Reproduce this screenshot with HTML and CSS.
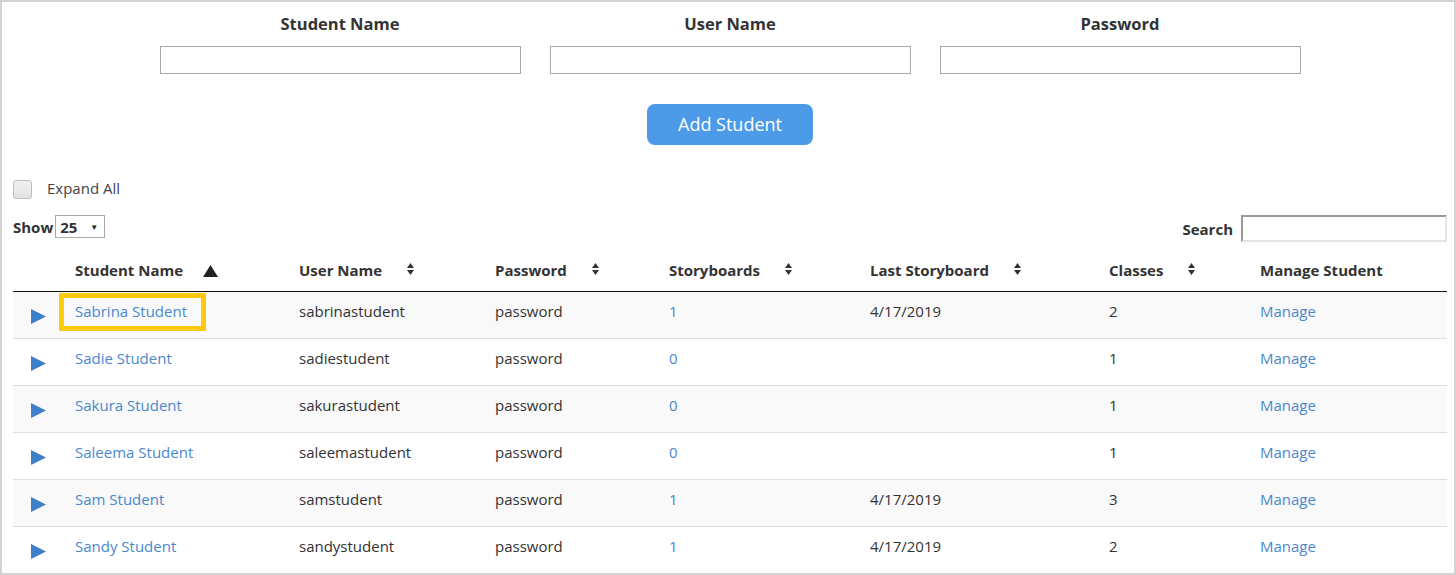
FILE: index.html
```html
<!DOCTYPE html>
<html>
<head>
<meta charset="utf-8">
<link rel="stylesheet" href="styles.css">
</head>
<body>
<div class="frame">
  <div class="add-form">
    <div class="field">
      <label class="field-label">Student Name</label>
      <input class="field-input" type="text">
    </div>
    <div class="field">
      <label class="field-label">User Name</label>
      <input class="field-input" type="text">
    </div>
    <div class="field">
      <label class="field-label">Password</label>
      <input class="field-input" type="text">
    </div>
  </div>
  <div class="btn-row"><button class="add-btn">Add Student</button></div>

  <div class="expand-row">
    <span class="checkbox"></span>
    <span class="expand-label">Expand All</span>
  </div>

  <div class="controls">
    <div class="show">
      <span class="ctl-label">Show</span>
      <span class="select"><span>25</span><span class="caret">&#9660;</span></span>
    </div>
    <div class="search">
      <span class="ctl-label">Search</span>
      <span class="search-input"></span>
    </div>
  </div>

  <table class="grid">
    <colgroup>
      <col class="c0"><col class="c1"><col class="c2"><col class="c3"><col class="c4"><col class="c5"><col class="c6"><col class="c7">
    </colgroup>
    <thead>
      <tr>
        <th></th>
        <th>Student Name<svg class="sort-asc" width="15" height="12" viewBox="0 0 15 12"><polygon points="7.5,0 15,12 0,12" fill="#222"/></svg></th>
        <th>User Name<svg class="sort" width="7" height="12" viewBox="0 0 7 12"><polygon points="3.5,0 7,5 0,5" fill="#333"/><polygon points="0,7 7,7 3.5,12" fill="#333"/></svg></th>
        <th>Password<svg class="sort" width="7" height="12" viewBox="0 0 7 12"><polygon points="3.5,0 7,5 0,5" fill="#333"/><polygon points="0,7 7,7 3.5,12" fill="#333"/></svg></th>
        <th>Storyboards<svg class="sort" width="7" height="12" viewBox="0 0 7 12"><polygon points="3.5,0 7,5 0,5" fill="#333"/><polygon points="0,7 7,7 3.5,12" fill="#333"/></svg></th>
        <th>Last Storyboard<svg class="sort" width="7" height="12" viewBox="0 0 7 12"><polygon points="3.5,0 7,5 0,5" fill="#333"/><polygon points="0,7 7,7 3.5,12" fill="#333"/></svg></th>
        <th>Classes<svg class="sort" width="7" height="12" viewBox="0 0 7 12"><polygon points="3.5,0 7,5 0,5" fill="#333"/><polygon points="0,7 7,7 3.5,12" fill="#333"/></svg></th>
        <th>Manage Student</th>
      </tr>
    </thead>
    <tbody>
      <tr>
        <td class="exp"><svg class="play" width="15" height="15" viewBox="0 0 15 15"><polygon points="0,0 15,7.5 0,15" fill="#3d7fc9"/></svg></td>
        <td class="name"><a class="link">Sabrina Student</a><span class="highlight"></span></td>
        <td>sabrinastudent</td><td>password</td><td><a class="link">1</a></td><td>4/17/2019</td><td>2</td><td><a class="link">Manage</a></td>
      </tr>
      <tr>
        <td class="exp"><svg class="play" width="15" height="15" viewBox="0 0 15 15"><polygon points="0,0 15,7.5 0,15" fill="#3d7fc9"/></svg></td>
        <td class="name"><a class="link">Sadie Student</a></td>
        <td>sadiestudent</td><td>password</td><td><a class="link">0</a></td><td></td><td>1</td><td><a class="link">Manage</a></td>
      </tr>
      <tr>
        <td class="exp"><svg class="play" width="15" height="15" viewBox="0 0 15 15"><polygon points="0,0 15,7.5 0,15" fill="#3d7fc9"/></svg></td>
        <td class="name"><a class="link">Sakura Student</a></td>
        <td>sakurastudent</td><td>password</td><td><a class="link">0</a></td><td></td><td>1</td><td><a class="link">Manage</a></td>
      </tr>
      <tr>
        <td class="exp"><svg class="play" width="15" height="15" viewBox="0 0 15 15"><polygon points="0,0 15,7.5 0,15" fill="#3d7fc9"/></svg></td>
        <td class="name"><a class="link">Saleema Student</a></td>
        <td>saleemastudent</td><td>password</td><td><a class="link">0</a></td><td></td><td>1</td><td><a class="link">Manage</a></td>
      </tr>
      <tr>
        <td class="exp"><svg class="play" width="15" height="15" viewBox="0 0 15 15"><polygon points="0,0 15,7.5 0,15" fill="#3d7fc9"/></svg></td>
        <td class="name"><a class="link">Sam Student</a></td>
        <td>samstudent</td><td>password</td><td><a class="link">1</a></td><td>4/17/2019</td><td>3</td><td><a class="link">Manage</a></td>
      </tr>
      <tr>
        <td class="exp"><svg class="play" width="15" height="15" viewBox="0 0 15 15"><polygon points="0,0 15,7.5 0,15" fill="#3d7fc9"/></svg></td>
        <td class="name"><a class="link">Sandy Student</a></td>
        <td>sandystudent</td><td>password</td><td><a class="link">1</a></td><td>4/17/2019</td><td>2</td><td><a class="link">Manage</a></td>
      </tr>
    </tbody>
  </table>
</div>
</body>
</html>
```

FILE: styles.css
```css
* { box-sizing: border-box; }
html, body { margin: 0; padding: 0; background: #fff; }
body {
  font-family: "Open Sans", "Liberation Sans", sans-serif;
  font-size: 15px;
  color: #333;
}
.frame {
  width: 1456px;
  height: 575px;
  border: 2px solid #d3d3d3;
  padding: 11px 7px 0 11px;
  overflow: hidden;
}
.add-form {
  display: grid;
  grid-template-columns: 361px 361px 361px;
  column-gap: 29px;
  justify-content: center;
}
.field { display: flex; flex-direction: column; align-items: center; }
.field-label {
  font-weight: 700;
  font-size: 16.5px;
  line-height: 22px;
  color: #333;
}
.field-input {
  margin-top: 11px;
  width: 361px;
  height: 28px;
  border: 1px solid #a9a9a9;
  background: #fff;
  padding: 0;
}
.btn-row { display: flex; justify-content: center; margin-top: 30px; }
.add-btn {
  width: 166px;
  height: 41px;
  border: none;
  border-radius: 8px;
  background: #4d9be8;
  color: #fff;
  font-family: "Open Sans", "Liberation Sans", sans-serif;
  font-size: 18px;
  line-height: 24px;
  padding: 0 0 2px;
}
.expand-row {
  display: flex;
  align-items: center;
  margin-top: 35px;
  height: 19px;
}
.checkbox {
  width: 19px;
  height: 19px;
  border: 1px solid #bdbdbd;
  border-radius: 3px;
  background: linear-gradient(#f0f0f0, #e2e2e2);
}
.expand-label { margin-left: 15px; margin-top: -2px; color: #444; font-size: 15px; line-height: 19px; }
.controls {
  display: flex;
  justify-content: space-between;
  align-items: flex-start;
  margin-top: 15px;
  height: 28px;
}
.show, .search { display: flex; align-items: flex-start; }
.ctl-label { font-weight: 700; font-size: 15px; line-height: 20px; color: #333; }
.show .ctl-label { margin-top: 3px; }
.search .ctl-label { margin-top: 5px; }
.select {
  margin-left: 2px;
  margin-top: 1px;
  width: 50px;
  height: 23px;
  border: 1px solid #a9a9a9;
  display: flex;
  align-items: center;
  justify-content: space-between;
  padding: 0 6px 0 4px;
  font-weight: 700;
  font-size: 15px;
}
.caret { font-size: 8px; color: #222; }
.search-input {
  margin-left: 8px;
  margin-top: 1px;
  width: 206px;
  height: 27px;
  border-style: solid;
  border-width: 2px;
  border-color: #9a9a9a #e4e4e4 #e4e4e4 #9a9a9a;
  background: #fff;
}
.grid {
  margin-top: 9px;
  width: 1434px;
  table-layout: fixed;
  border-collapse: collapse;
}
.c0 { width: 50px; }
.c1 { width: 224px; }
.c2 { width: 196px; }
.c3 { width: 174px; }
.c4 { width: 201px; }
.c5 { width: 239px; }
.c6 { width: 151px; }
.c7 { width: 199px; }
.grid th {
  text-align: left;
  font-weight: 700;
  font-size: 15px;
  line-height: 20px;
  color: #333;
  padding: 9px 12px 11px;
  border-bottom: 1px solid #111;
  white-space: nowrap;
}
.sort-asc { margin-left: 20px; vertical-align: -1px; }
.sort { margin-left: 25px; vertical-align: 1px; }
.grid td {
  padding: 9px 12px 17px;
  line-height: 20px;
  vertical-align: top;
  border-bottom: 1px solid #dedede;
  color: #333;
  white-space: nowrap;
}
.grid tbody tr:nth-child(odd) td { background: #f9f9f9; }
.grid td.exp { padding: 0; }
.play { display: block; margin: 17px 0 0 18px; }
.grid td.name { position: relative; }
.link { color: #4a88cc; text-decoration: none; }
.highlight {
  position: absolute;
  left: -4px;
  top: 1px;
  width: 147px;
  height: 38px;
  border: 5px solid #ffc80a;
}
```
